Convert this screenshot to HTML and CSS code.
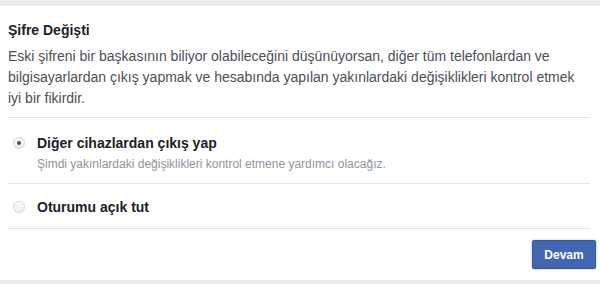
FILE: index.html
```html
<!DOCTYPE html>
<html lang="tr">
<head>
<meta charset="utf-8">
<link rel="stylesheet" href="styles.css">
</head>
<body>
<div class="panel">
  <div class="content">
    <h2 class="title">Şifre Değişti</h2>
    <p class="desc">Eski şifreni bir başkasının biliyor olabileceğini düşünüyorsan, diğer tüm telefonlardan ve bilgisayarlardan çıkış yapmak ve hesabında yapılan yakınlardaki değişiklikleri kontrol etmek iyi bir fikirdir.</p>
    <div class="option option-first">
      <span class="radio checked"></span>
      <div class="option-text">
        <div class="option-label">Diğer cihazlardan çıkış yap</div>
        <div class="option-sub">Şimdi yakınlardaki değişiklikleri kontrol etmene yardımcı olacağız.</div>
      </div>
    </div>
    <div class="option">
      <span class="radio"></span>
      <div class="option-text">
        <div class="option-label">Oturumu açık tut</div>
      </div>
    </div>
  </div>
  <div class="footer">
    <button class="btn">Devam</button>
  </div>
</div>
</body>
</html>
```
FILE: styles.css
```css
html, body {
  margin: 0;
  padding: 0;
}
body {
  background: #e9ebee;
  font-family: "Liberation Sans", Arial, sans-serif;
  width: 600px;
  height: 284px;
  overflow: hidden;
}
.panel {
  margin-top: 6px;
  height: 274px;
  background: #fff;
  box-sizing: border-box;
  display: flex;
  flex-direction: column;
}
.content {
  padding: 15px 10px 0 8px;
}
.title {
  margin: 0;
  font-size: 14px;
  line-height: 18px;
  font-weight: bold;
  color: #1d2129;
}
.desc {
  margin: 7px 0 0;
  font-size: 14px;
  line-height: 21px;
  color: #4b4f56;
  padding-bottom: 8px;
  border-bottom: 1px solid #e5e5e5;
}
.option {
  display: flex;
  align-items: flex-start;
  gap: 12px;
  padding: 14px 0 12px 5px;
  border-bottom: 1px solid #e5e5e5;
}
.option-first {
  padding-top: 16px;
  padding-bottom: 11px;
}
.radio {
  flex: none;
  width: 12px;
  height: 12px;
  margin-top: 3px;
  border-radius: 50%;
  border: 1px solid #d3d6db;
  background: linear-gradient(#fdfdfd, #eceef1);
  box-sizing: border-box;
  display: flex;
  align-items: center;
  justify-content: center;
}
.radio.checked::after {
  content: "";
  width: 4px;
  height: 4px;
  border-radius: 50%;
  background: #4b4f56;
}
.option-label {
  font-size: 14px;
  line-height: 18px;
  font-weight: bold;
  color: #1d2129;
}
.option-sub {
  margin-top: 4px;
  font-size: 12px;
  line-height: 16px;
  color: #90949c;
}
.footer {
  display: flex;
  justify-content: flex-end;
  padding: 11px 4px 0 0;
}
.btn {
  width: 64px;
  height: 29px;
  background: #4267b2;
  border: 1px solid #365899;
  border-radius: 2px;
  color: #fff;
  font-family: "Liberation Sans", Arial, sans-serif;
  font-size: 12px;
  font-weight: bold;
  padding: 0;
  box-shadow: 0 0 2px rgba(66, 103, 178, 0.6);
}
```
